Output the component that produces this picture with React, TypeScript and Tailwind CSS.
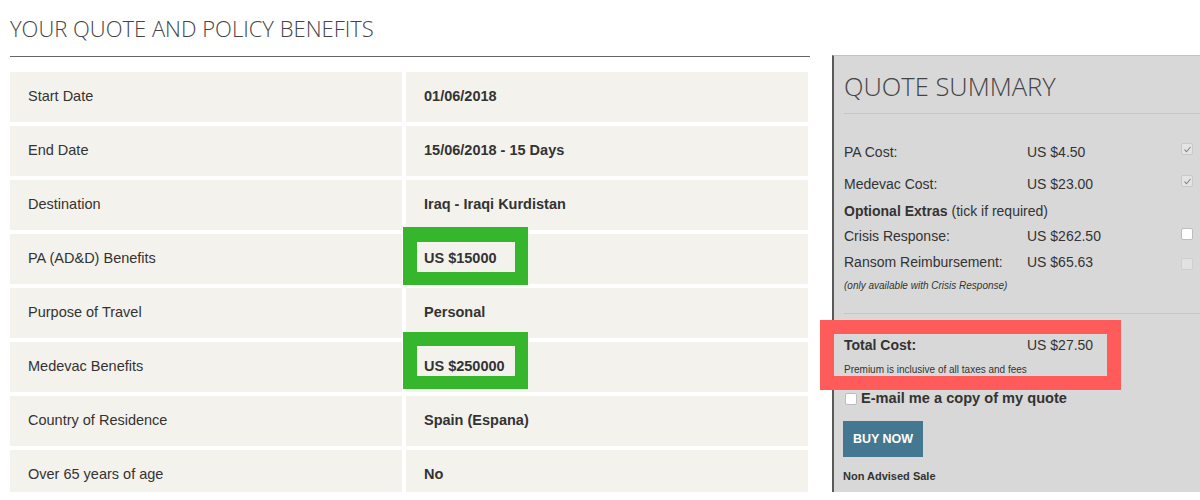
import React from "react";

const rows: [string, string][] = [
  ["Start Date", "01/06/2018"],
  ["End Date", "15/06/2018 - 15 Days"],
  ["Destination", "Iraq - Iraqi Kurdistan"],
  ["PA (AD&D) Benefits", "US $15000"],
  ["Purpose of Travel", "Personal"],
  ["Medevac Benefits", "US $250000"],
  ["Country of Residence", "Spain (Espana)"],
  ["Over 65 years of age", "No"],
];

function CheckedBox() {
  return (
    <div className="w-[12px] h-[12px] rounded-[2px] bg-[#e4e4e4] border border-[#c9c9c9] flex items-center justify-center">
      <svg width="9" height="9" viewBox="0 0 10 10">
        <path d="M2 5.5 L4 7.5 L8 2.5" fill="none" stroke="#8a8a8a" strokeWidth="1.3" strokeLinecap="round" strokeLinejoin="round" />
      </svg>
    </div>
  );
}

function EmptyBox({ disabled }: { disabled?: boolean }) {
  return (
    <div
      className={
        disabled
          ? "w-[12px] h-[12px] rounded-[2px] bg-[#e2e2e2] border border-[#cfcfcf]"
          : "w-[12px] h-[12px] rounded-[2px] bg-white border border-[#bdbdbd]"
      }
    />
  );
}

export default function App() {
  return (
    <div className="relative w-[1200px] h-[500px] bg-white overflow-hidden font-['Liberation_Sans',Arial,sans-serif] text-[#333]">
      <div className="flex h-[492px] overflow-hidden">
        {/* Left column */}
        <div className="ml-[10px] w-[800px] shrink-0">
          <div className="pt-[13px] h-[43px] leading-[30px] text-[22px] font-light text-[#444] font-['Open_Sans',sans-serif] whitespace-nowrap">
            YOUR QUOTE AND POLICY BENEFITS
          </div>
          <div className="mt-[13px] h-px bg-[#666] w-[800px]" />
          <div className="mt-[15px] w-[798px] grid grid-cols-[392px_402px] gap-[4px]">
            {rows.map(([label, value]) => (
              <React.Fragment key={label}>
                <div className="h-[50px] bg-[#f3f2ec] flex items-center pl-[18px] text-[14.5px]">
                  {label}
                </div>
                <div className="h-[50px] bg-[#f3f2ec] flex items-center pl-[18px] text-[14.5px] font-bold">
                  {value}
                </div>
              </React.Fragment>
            ))}
          </div>
        </div>

        {/* Quote summary panel */}
        <div className="ml-[22px] mt-[55px] flex-1 bg-[#d8d8d8] border-l-2 border-t border-l-[#5a5a5a] border-t-[#c2c2c2] pl-[10px]">
          <div className="pt-[15px] h-[45px] leading-[30px] text-[25.5px] font-light text-[#444] font-['Open_Sans',sans-serif] whitespace-nowrap">
            QUOTE SUMMARY
          </div>
          <div className="mt-[12px] h-px bg-[#c6c6c6]" />

          <div className="mt-[22px] text-[14px]">
            <div className="h-[32px] grid grid-cols-[183px_154px_12px] items-center">
              <span>PA Cost:</span>
              <span>US $4.50</span>
              <div className="-mt-[6px]"><CheckedBox /></div>
            </div>
            <div className="h-[32px] grid grid-cols-[183px_154px_12px] items-center">
              <span>Medevac Cost:</span>
              <span>US $23.00</span>
              <div className="-mt-[6px]"><CheckedBox /></div>
            </div>
            <div className="h-[23px] flex items-center">
              <span className="font-bold">Optional Extras</span>
              <span className="ml-[4px]">(tick if required)</span>
            </div>
            <div className="h-[26px] grid grid-cols-[183px_154px_12px] items-center">
              <span>Crisis Response:</span>
              <span>US $262.50</span>
              <div className="-mt-[4px]"><EmptyBox /></div>
            </div>
            <div className="h-[26px] grid grid-cols-[183px_154px_12px] items-center">
              <span>Ransom Reimbursement:</span>
              <span>US $65.63</span>
              <div className="mt-[3px]"><EmptyBox disabled /></div>
            </div>
            <div className="h-[20px] flex items-center text-[10px] italic">
              (only available with Crisis Response)
            </div>
          </div>

          <div className="mt-[18px] h-px bg-[#c6c6c6]" />

          <div className="mt-[19px] h-[24px] grid grid-cols-[183px_154px] items-center text-[14px]">
            <span className="font-bold">Total Cost:</span>
            <span>US $27.50</span>
          </div>
          <div className="h-[24px] flex items-center text-[10px]">
            Premium is inclusive of all taxes and fees
          </div>

          <div className="mt-[8px] h-[20px] flex items-center">
            <div className="ml-[1px] w-[12px] h-[12px] rounded-[2px] bg-white border border-[#bdbdbd]" />
            <span className="ml-[4px] text-[14.6px] font-bold">E-mail me a copy of my quote</span>
          </div>

          <div className="mt-[12px] w-[80px] h-[36px] bg-[#447890] flex items-center justify-center text-white text-[12.5px] font-bold -ml-[1px]">
            BUY NOW
          </div>

          <div className="mt-[11px] h-[16px] flex items-center text-[11px] font-bold -ml-[1px]">
            Non Advised Sale
          </div>
        </div>
      </div>

      {/* Annotation overlays */}
      <div className="absolute left-[403px] top-[227px] w-[125px] h-[58px] border-[#36b62c] border-l-[14px] border-r-[13px] border-t-[15px] border-b-[13px]" />
      <div className="absolute left-[403px] top-[332px] w-[125px] h-[57px] border-[#36b62c] border-l-[14px] border-r-[13px] border-t-[14px] border-b-[13px]" />
      <div className="absolute left-[820px] top-[320px] w-[301px] h-[70px] border-[#ff5b5b] border-[14px]" />
    </div>
  );
}
